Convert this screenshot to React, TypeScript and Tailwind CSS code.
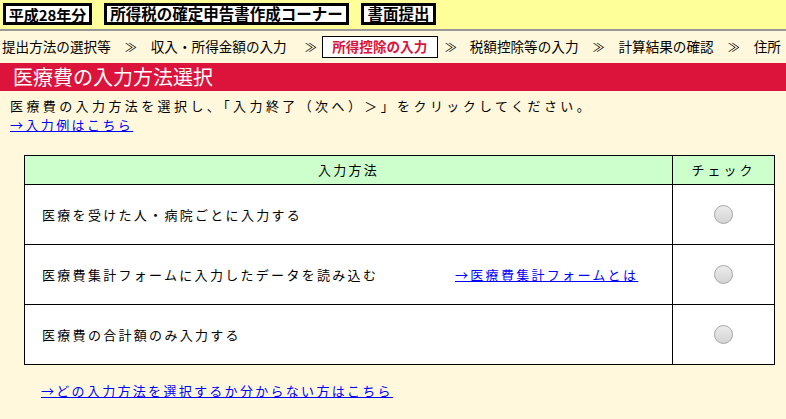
import React from "react";

const font = { fontFamily: '"Noto Sans CJK JP", "Noto Sans", sans-serif' };

function Radio() {
  return (
    <div className="mx-auto h-[19px] w-[19px] rounded-full border border-[#a8a8a8] bg-gradient-to-b from-[#ececec] to-[#d4d4d4]" />
  );
}

function Sep() {
  return <span className="mx-[14px] shrink-0 text-[12px]">≫</span>;
}

export default function App() {
  return (
    <div
      className="min-h-[419px] w-[786px] overflow-hidden bg-[#fff8dc] text-black"
      style={font}
    >
      {/* top bar */}
      <div className="flex h-[29px] items-start gap-[12px] bg-[#ffff99] pl-[3px] pt-[3px]">
        <div className="flex h-[22px] w-[89px] shrink-0 items-center justify-center border-[3px] border-black bg-white text-[15px] font-bold leading-none">
          平成28年分
        </div>
        <div className="flex h-[22px] w-[245px] shrink-0 items-center justify-center border-[3px] border-black bg-white text-[15.5px] font-bold leading-none">
          所得税の確定申告書作成コーナー
        </div>
        <div className="flex h-[22px] w-[75px] shrink-0 items-center justify-center border-[3px] border-black bg-white text-[15.5px] font-bold leading-none">
          書面提出
        </div>
      </div>
      <div className="h-[2px] bg-[#999999]" />

      {/* breadcrumb */}
      <div className="flex h-[32px] items-center overflow-hidden whitespace-nowrap pl-[2px] text-[13.6px] leading-none">
        <span className="shrink-0">提出方法の選択等</span>
        <Sep />
        <span className="shrink-0">収入・所得金額の入力</span>
        <span className="ml-[18px] mr-[5px] shrink-0 text-[12px]">≫</span>
        <span className="flex h-[22px] w-[116px] shrink-0 items-center justify-center border border-black bg-white font-bold text-[#dc143c]">
          所得控除の入力
        </span>
        <span className="ml-[7px] mr-[13px] shrink-0 text-[12px]">≫</span>
        <span className="shrink-0">税額控除等の入力</span>
        <Sep />
        <span className="shrink-0">計算結果の確認</span>
        <Sep />
        <span className="shrink-0">住所</span>
      </div>

      {/* heading */}
      <div className="flex h-[28px] items-center bg-[#dc143c] pl-[13px] text-[20px] leading-none text-white">
        医療費の入力方法選択
      </div>

      {/* description */}
      <div className="pl-[10px] pt-[5px] text-[13px] leading-[19px]">
        <div className="tracking-[3.4px]">
          医療費の入力方法を選択し、「入力終了（次へ）＞」をクリックしてください。
        </div>
        <a href="#" className="tracking-[2.4px] text-[#0000ff] underline">
          →入力例はこちら
        </a>
      </div>

      {/* table */}
      <div className="ml-[24px] mt-[21px] w-[750px]">
        <table className="w-[750px] table-fixed border-collapse border border-black text-[13px] tracking-[2.3px]">
          <colgroup>
            <col className="w-[648px]" />
            <col className="w-[102px]" />
          </colgroup>
          <thead>
            <tr className="h-[29px] bg-[#ccffcc]">
              <th className="border border-black text-center font-normal">入力方法</th>
              <th className="border border-black text-center font-normal tracking-[3px]">チェック</th>
            </tr>
          </thead>
          <tbody className="bg-white">
            <tr className="h-[60px]">
              <td className="border border-black pl-[17px]">医療を受けた人・病院ごとに入力する</td>
              <td className="border border-black">
                <Radio />
              </td>
            </tr>
            <tr className="h-[60px]">
              <td className="border border-black pl-[17px]">
                <div className="flex">
                  <span className="w-[413px] shrink-0">医療費集計フォームに入力したデータを読み込む</span>
                  <a href="#" className="text-[#0000ff] underline">
                    →医療費集計フォームとは
                  </a>
                </div>
              </td>
              <td className="border border-black">
                <Radio />
              </td>
            </tr>
            <tr className="h-[60px]">
              <td className="border border-black pl-[17px]">医療費の合計額のみ入力する</td>
              <td className="border border-black">
                <Radio />
              </td>
            </tr>
          </tbody>
        </table>
      </div>

      {/* bottom link */}
      <div className="pl-[41px] pt-[16px] text-[13px] tracking-[2.3px]">
        <a href="#" className="text-[#0000ff] underline">
          →どの入力方法を選択するか分からない方はこちら
        </a>
      </div>
    </div>
  );
}
